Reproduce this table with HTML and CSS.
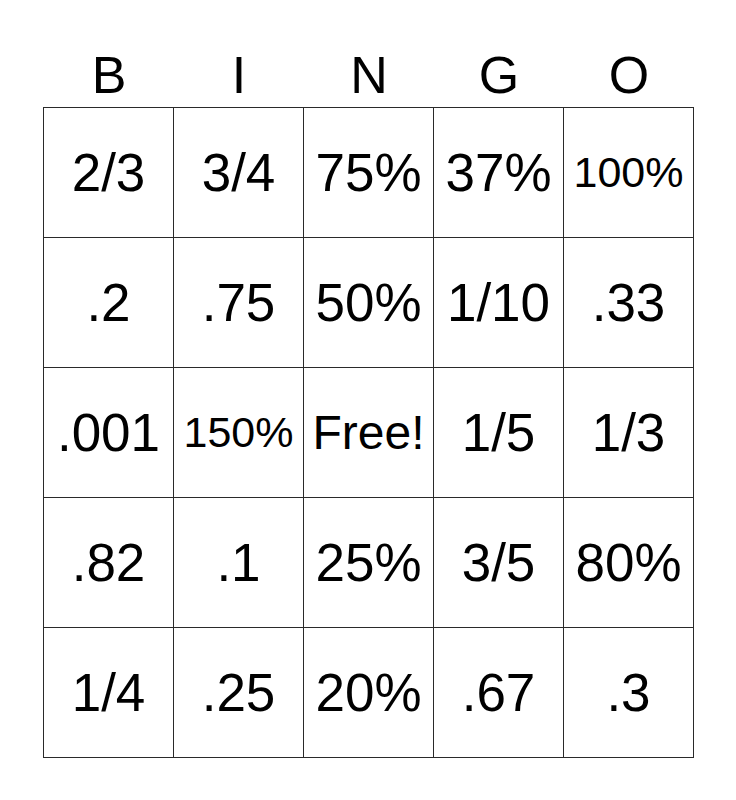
FILE: index.html
```html
<!DOCTYPE html>
<html>
<head>
<meta charset="utf-8">
<link rel="stylesheet" href="styles.css">
</head>
<body>
<div class="card">
  <div class="head">
    <div class="letter">B</div><div class="letter">I</div><div class="letter">N</div><div class="letter">G</div><div class="letter">O</div>
  </div>
  <div class="grid">
    <div class="cell">2/3</div><div class="cell">3/4</div><div class="cell">75%</div><div class="cell">37%</div><div class="cell small">100%</div>
    <div class="cell">.2</div><div class="cell">.75</div><div class="cell">50%</div><div class="cell">1/10</div><div class="cell">.33</div>
    <div class="cell">.001</div><div class="cell small">150%</div><div class="cell free">Free!</div><div class="cell">1/5</div><div class="cell">1/3</div>
    <div class="cell">.82</div><div class="cell">.1</div><div class="cell">25%</div><div class="cell">3/5</div><div class="cell">80%</div>
    <div class="cell">1/4</div><div class="cell">.25</div><div class="cell">20%</div><div class="cell">.67</div><div class="cell">.3</div>
  </div>
</div>
</body>
</html>
```
FILE: styles.css
```css
html, body {
  margin: 0;
  padding: 0;
  background: #fff;
}
body {
  font-family: "Liberation Sans", Arial, sans-serif;
  color: #000;
}
.card {
  padding: 44px 0 0 43px;
  width: 651px;
}
.head {
  display: grid;
  grid-template-columns: repeat(5, 130px);
  padding-left: 1px;
}
.letter {
  text-align: center;
  font-size: 52px;
  line-height: 63px;
}
.grid {
  display: grid;
  grid-template-columns: repeat(5, 130px);
  grid-auto-rows: 130px;
  border-left: 1px solid #2a2a2a;
  border-top: 1px solid #2a2a2a;
  width: 650px;
}
.cell {
  border-right: 1px solid #2a2a2a;
  border-bottom: 1px solid #2a2a2a;
  display: flex;
  align-items: center;
  justify-content: center;
  font-size: 53px;
  white-space: nowrap;
  overflow: hidden;
}
.small {
  font-size: 43px;
}
.free {
  font-size: 48px;
}
```
